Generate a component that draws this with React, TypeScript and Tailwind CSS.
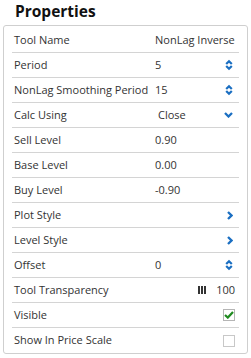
import React from 'react'

const font = { fontFamily: '"Open Sans", "Noto Sans", sans-serif' }

function Spinner() {
  return (
    <svg width="8" height="12" viewBox="0 0 8 12" className="text-[#1b6fc2]">
      <path d="M1.2 5 L4 2.2 L6.8 5" fill="none" stroke="currentColor" strokeWidth="2.2" />
      <path d="M1.2 7 L4 9.8 L6.8 7" fill="none" stroke="currentColor" strokeWidth="2.2" />
    </svg>
  )
}

function ChevronDown() {
  return (
    <svg width="9" height="6" viewBox="0 0 9 6" className="text-[#1b6fc2]">
      <path d="M1 1 L4.5 4.5 L8 1" fill="none" stroke="currentColor" strokeWidth="2.3" />
    </svg>
  )
}

function ChevronRight() {
  return (
    <svg width="6" height="9" viewBox="0 0 6 9" className="text-[#1b6fc2]">
      <path d="M1 1 L4.5 4.5 L1 8" fill="none" stroke="currentColor" strokeWidth="2.3" />
    </svg>
  )
}

function Row({
  label,
  value,
  right,
  last,
}: {
  label: string
  value?: React.ReactNode
  right?: React.ReactNode
  last?: boolean
}) {
  return (
    <div
      className={`flex items-center h-[25px] px-[2px] text-[11px] text-[#333] ${
        last ? '' : 'border-b border-[#d4d4d4]'
      }`}
    >
      <div className="w-[141px] shrink-0 whitespace-nowrap">{label}</div>
      <div className="flex-1 whitespace-nowrap">{value}</div>
      <div className="flex items-center justify-end pr-[4px]">{right}</div>
    </div>
  )
}

export default function App() {
  return (
    <div className="w-[251px] h-[358px] bg-white" style={font}>
      <h1 className="pl-[15px] pt-[1px] h-[25px] text-[15.5px] font-bold leading-[20px] text-[#111]">
        Properties
      </h1>

      <div className="mx-[3px] border border-[#cfcfcf] rounded-[3px] px-[8px] pt-[2px]">
        <Row label="Tool Name" value={<span className="ml-[0px]">NonLag Inverse</span>} />
        <Row label="Period" value="5" right={<Spinner />} />
        <Row label="NonLag Smoothing Period" value="15" right={<Spinner />} />
        <Row
          label="Calc Using"
          value={<span className="ml-[3px]">Close</span>}
          right={<ChevronDown />}
        />
        <Row label="Sell Level" value="0.90" />
        <Row label="Base Level" value="0.00" />
        <Row label="Buy Level" value="-0.90" />
        <Row label="Plot Style" right={<ChevronRight />} />
        <Row label="Level Style" right={<ChevronRight />} />
        <Row label="Offset" value="0" right={<Spinner />} />
        <Row
          label="Tool Transparency"
          right={
            <div className="flex items-center">
              <div className="flex gap-[1px] mr-[10px]">
                <div className="w-[2px] h-[8px] bg-[#333]" />
                <div className="w-[2px] h-[8px] bg-[#333]" />
                <div className="w-[2px] h-[8px] bg-[#333]" />
              </div>
              <span className="-mr-[2px]">100</span>
            </div>
          }
        />
        <Row
          label="Visible"
          right={
            <div className="w-[12px] h-[12px] border border-[#b5b5b5] flex items-center justify-center -mr-[2px]">
              <svg width="10" height="8" viewBox="0 0 10 8">
                <path d="M1 4 L3.8 6.6 L9 1" fill="none" stroke="#1f8a1f" strokeWidth="2.2" />
              </svg>
            </div>
          }
        />
        <Row
          label="Show In Price Scale"
          last
          right={<div className="w-[12px] h-[12px] border border-[#c8c8c8] -mr-[2px]" />}
        />
      </div>
    </div>
  )
}
